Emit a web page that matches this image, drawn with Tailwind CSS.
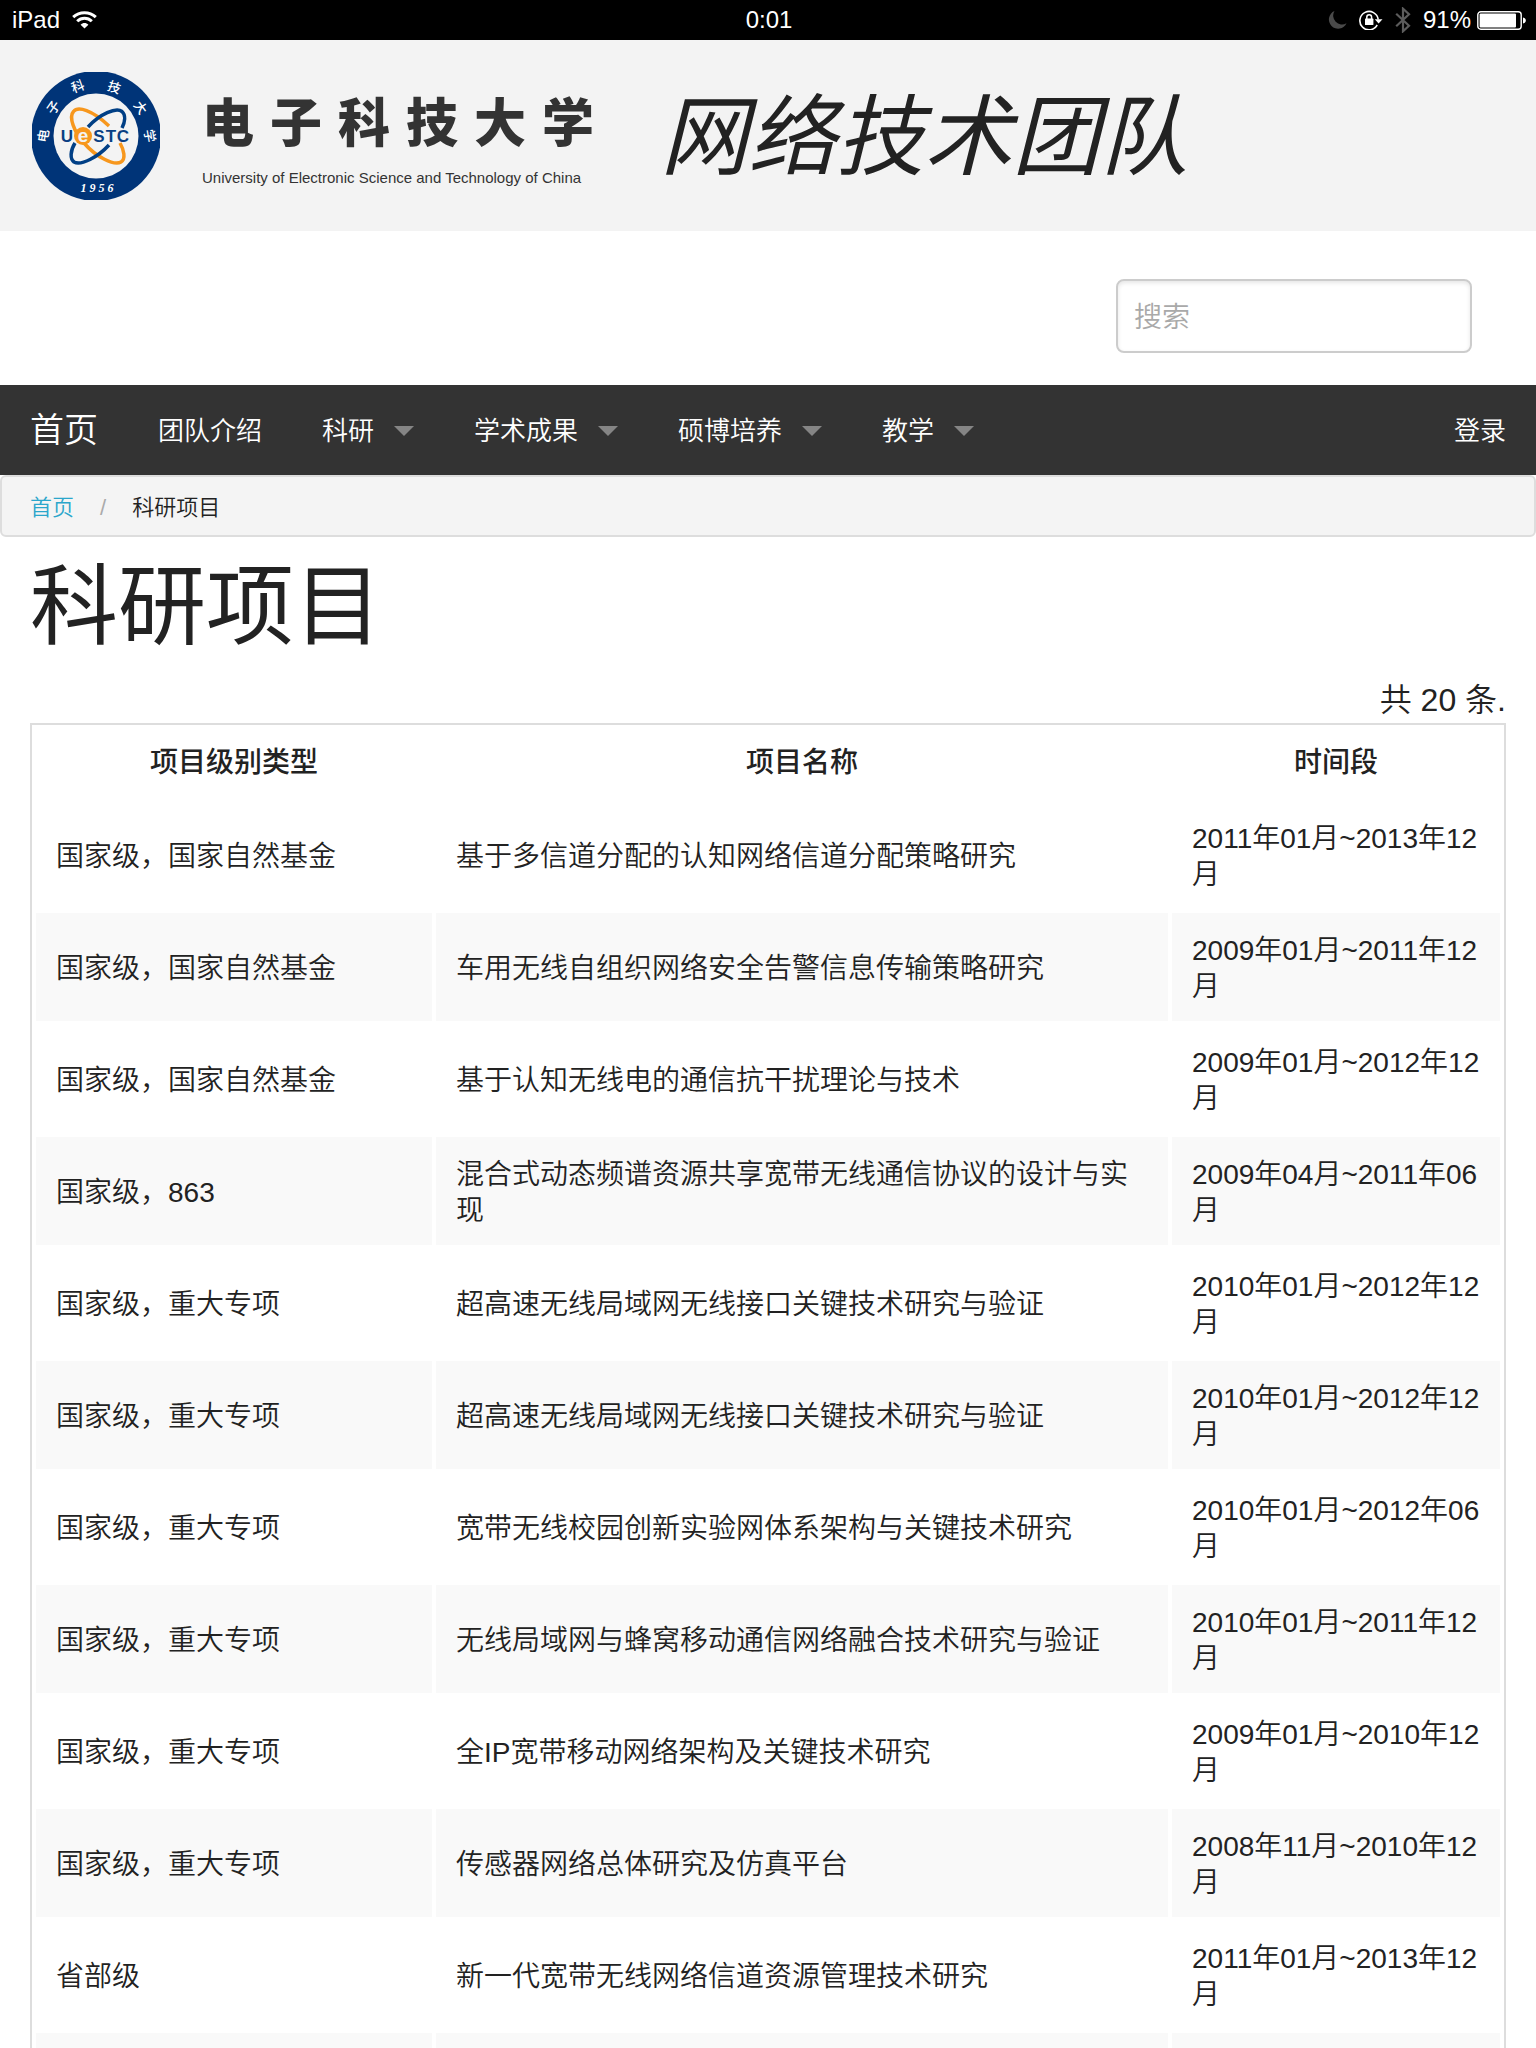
<!DOCTYPE html>
<html lang="zh-CN">
<head>
<meta charset="utf-8">
<meta name="viewport" content="width=device-width, initial-scale=1">
<title>科研项目 - 网络技术团队</title>
<script src="https://cdn.jsdelivr.net/npm/@tailwindcss/browser@4"></script>
</head>
<body class="flex h-screen flex-col overflow-hidden bg-white font-['Liberation_Sans','Noto_Sans_CJK_SC',sans-serif] font-[350] text-[#222]">

<!-- Device status bar -->
<div class="grid h-10 shrink-0 grid-cols-3 items-center bg-black pr-[10px] pl-3 text-2xl text-white">
  <div class="flex items-center gap-3">
    <span>iPad</span>
    <svg class="h-[18px] w-[25px]" viewBox="0 0 25 18" fill="none" stroke="#fff" stroke-width="3" aria-hidden="true">
      <path d="M1.2 6.2C7.500 .2 17.500 .2 23.800 6.200"/>
      <path d="M5.200 10.300C9.300 6.300 15.700 6.300 19.800 10.300"/>
      <path d="M8.600 13.700c2.200-2.200 5.600-2.200 7.800 0L12.500 17.600z" fill="#fff" stroke="none"/>
    </svg>
  </div>
  <span class="text-center">0:01</span>
  <div class="flex items-center justify-end">
    <svg class="mr-3 h-[18px] w-[19px]" viewBox="0 0 19 18" fill="#4a4a4a" aria-hidden="true"><path d="M6.500 0A9.200 9.200 0 1 0 18.500 12.200 8.800 8.800 0 0 1 6.500 0z"/></svg>
    <svg class="mr-3 h-5 w-6" viewBox="0 0 24 20" aria-hidden="true">
      <path d="M18.200 15A9.200 9.200 0 1 1 19.200 9.500" fill="none" stroke="#fff" stroke-width="1.600"/>
      <path d="M15.800 9.300h7.700l-3.900 4.200z" fill="#fff"/>
      <rect x="6" y="8.600" width="8.400" height="6.400" rx=".6" fill="#fff"/>
      <path d="M7.800 9V7.200a2.400 2.400 0 0 1 4.800 0V9" fill="none" stroke="#fff" stroke-width="1.500"/>
    </svg>
    <svg class="mr-3 h-[26px] w-4" viewBox="0 0 16 26" fill="none" stroke="#5c5c5c" stroke-width="2.200" aria-hidden="true"><path d="M1.200 6.800 14 18.800 8 24.300V1.700L14 7.200 1.200 19.200"/></svg>
    <span class="mr-[6px]">91%</span>
    <svg class="h-[19px] w-[49px]" viewBox="0 0 49 19" aria-hidden="true">
      <rect x=".8" y=".8" width="43.400" height="17.400" rx="3" fill="none" stroke="#fff" stroke-width="1.400"/>
      <rect x="2.600" y="2.600" width="36.400" height="13.800" rx="1" fill="#fff"/>
      <path d="M46 6.500c3.800.6 3.800 5.400 0 6z" fill="#fff"/>
    </svg>
  </div>
</div>

<div class="flex-1 overflow-y-auto [scrollbar-width:none]">
  <!-- Masthead -->
  <header class="flex h-[191px] items-center bg-[#f3f3f3] pl-8">
    <svg class="size-32 shrink-0" viewBox="0 0 128 128" role="img" aria-label="UESTC">
      <circle cx="64" cy="64" r="65" fill="#003478"/>
      <circle cx="64" cy="64" r="42.500" fill="#f3f3f3"/>
      <g fill="#fff" font-family="'Noto Sans CJK SC',sans-serif" font-size="13" font-weight="500" text-anchor="middle">
        <text transform="translate(12 64) rotate(-80)" y="4">电</text>
        <text transform="translate(22 36) rotate(-55)" y="4">子</text>
        <text transform="translate(46 15) rotate(-20)" y="4">科</text>
        <text transform="translate(82 16) rotate(20)" y="4">技</text>
        <text transform="translate(108 36) rotate(55)" y="4">大</text>
        <text transform="translate(117 64) rotate(80)" y="4">学</text>
      </g>
      <g fill="none" stroke-width="3.500">
        <path d="M77 54C60 38 46 34 41.500 39.500 36.500 45 42 60 52 71 64 85 82 94 89 90 94 87 92 78 88 71" stroke="#f7971d"/>
        <path d="M56 55C68 42 84 35 90 39.500 94 43 93 50 90 56M43 71C38 79 38 87 42 90 49 94 66 85 77 73" stroke="#003f85"/>
      </g>
      <g font-family="'Liberation Sans',sans-serif" font-weight="700" font-size="17" fill="#0a3f83" text-anchor="middle">
        <text x="35" y="70">U</text>
        <circle cx="51" cy="64" r="9" fill="#f7971d"/>
        <text x="51" y="70" font-size="19" fill="#f3f3f3">e</text>
        <text x="67" y="70">S</text>
        <text x="79" y="70">T</text>
        <text x="91" y="70">C</text>
      </g>
      <text x="65" y="120" font-family="'Liberation Serif',serif" font-style="italic" font-weight="700" font-size="12" fill="#fff" text-anchor="middle">1 9 5 6</text>
    </svg>
    <div class="ml-[42px] flex w-[392px] shrink-0 flex-col pt-[6px] text-[#333]">
      <div class="flex justify-between text-[52px] leading-[72px] font-black">
        <span>电</span><span>子</span><span>科</span><span>技</span><span>大</span><span>学</span>
      </div>
      <p class="mt-[6px] text-[15px] leading-6 whitespace-nowrap">University of Electronic Science and Technology of China</p>
    </div>
    <p class="ml-[66px] pt-1 text-[88px] leading-[124px] font-normal whitespace-nowrap italic">网络技术团队</p>
  </header>

  <!-- Search -->
  <form class="flex h-[154px] items-center justify-end pr-16" role="search">
    <input type="search" placeholder="搜索" aria-label="搜索" class="mt-4 h-[74px] w-[356px] appearance-none rounded-lg border-2 border-[#ccc] bg-white px-4 pt-1 text-[28px] leading-9 shadow-[inset_0_2px_4px_rgba(0,0,0,0.1)] outline-none placeholder:text-[#a9a9a9]">
  </form>

  <!-- Main navigation -->
  <nav class="flex h-[90px] items-center justify-between bg-[#333] px-[30px] pt-[2px] text-[26px] leading-9 text-white">
    <ul class="flex items-center gap-[60px]">
      <li><a href="#" class="text-[34px]">首页</a></li>
      <li><a href="#">团队介绍</a></li>
      <li><a href="#" class="flex items-center gap-5">科研<svg class="h-[10px] w-5" viewBox="0 0 20 10" fill="#858585" aria-hidden="true"><path d="M0 0h20L10 10z"/></svg></a></li>
      <li><a href="#" class="flex items-center gap-5">学术成果<svg class="h-[10px] w-5" viewBox="0 0 20 10" fill="#858585" aria-hidden="true"><path d="M0 0h20L10 10z"/></svg></a></li>
      <li><a href="#" class="flex items-center gap-5">硕博培养<svg class="h-[10px] w-5" viewBox="0 0 20 10" fill="#858585" aria-hidden="true"><path d="M0 0h20L10 10z"/></svg></a></li>
      <li><a href="#" class="flex items-center gap-5">教学<svg class="h-[10px] w-5" viewBox="0 0 20 10" fill="#858585" aria-hidden="true"><path d="M0 0h20L10 10z"/></svg></a></li>
    </ul>
    <a href="#">登录</a>
  </nav>

  <!-- Breadcrumb -->
  <nav class="flex h-[62px] items-center gap-[26px] rounded-md border-2 border-[#ddd] bg-[#f4f4f4] px-7 pt-1 text-[22px] leading-8" aria-label="面包屑">
    <a href="#" class="text-[#2ba6cb]">首页</a>
    <span class="text-[#aaa]">/</span>
    <span>科研项目</span>
  </nav>

  <main class="px-[30px] pt-2">
    <h1 class="text-[88px] leading-[124px] font-normal">科研项目</h1>
    <p class="mt-2 text-right text-[32px] leading-[46px]">共 20 条.</p>
    <table class="w-full table-fixed border-separate border-spacing-1 border-2 border-[#ddd] text-[28px] leading-9">
      <colgroup><col class="w-[396px]"><col><col class="w-[328px]"></colgroup>
      <thead>
        <tr>
          <th class="py-4 font-medium">项目级别类型</th><th class="py-4 font-medium">项目名称</th><th class="py-4 font-medium">时间段</th>
        </tr>
      </thead>
      <tbody class="[&_td]:h-[108px] [&_td]:px-5 [&_td]:pt-5 [&_td]:pb-4 [&_td]:break-all [&>tr:nth-child(even)>td]:bg-[#f9f9f9]">
        <tr><td>国家级，国家自然基金</td><td>基于多信道分配的认知网络信道分配策略研究</td><td>2011年01月~2013年12月</td></tr>
        <tr><td>国家级，国家自然基金</td><td>车用无线自组织网络安全告警信息传输策略研究</td><td>2009年01月~2011年12月</td></tr>
        <tr><td>国家级，国家自然基金</td><td>基于认知无线电的通信抗干扰理论与技术</td><td>2009年01月~2012年12月</td></tr>
        <tr><td>国家级，863</td><td>混合式动态频谱资源共享宽带无线通信协议的设计与实现</td><td>2009年04月~2011年06月</td></tr>
        <tr><td>国家级，重大专项</td><td>超高速无线局域网无线接口关键技术研究与验证</td><td>2010年01月~2012年12月</td></tr>
        <tr><td>国家级，重大专项</td><td>超高速无线局域网无线接口关键技术研究与验证</td><td>2010年01月~2012年12月</td></tr>
        <tr><td>国家级，重大专项</td><td>宽带无线校园创新实验网体系架构与关键技术研究</td><td>2010年01月~2012年06月</td></tr>
        <tr><td>国家级，重大专项</td><td>无线局域网与蜂窝移动通信网络融合技术研究与验证</td><td>2010年01月~2011年12月</td></tr>
        <tr><td>国家级，重大专项</td><td>全IP宽带移动网络架构及关键技术研究</td><td>2009年01月~2010年12月</td></tr>
        <tr><td>国家级，重大专项</td><td>传感器网络总体研究及仿真平台</td><td>2008年11月~2010年12月</td></tr>
        <tr><td>省部级</td><td>新一代宽带无线网络信道资源管理技术研究</td><td>2011年01月~2013年12月</td></tr>
        <tr><td></td><td></td><td></td></tr>
      </tbody>
    </table>
  </main>
</div>
</body>
</html>
